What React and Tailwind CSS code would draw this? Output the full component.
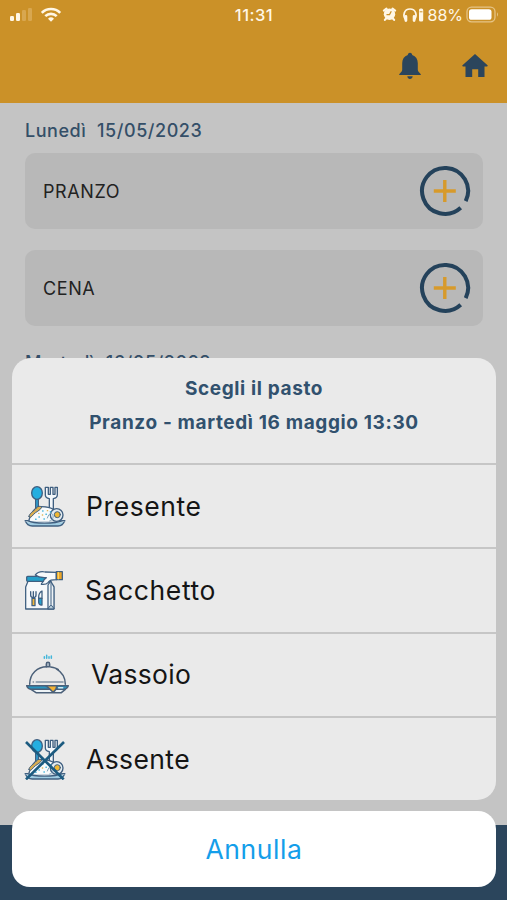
import React from "react";

const days = [
  { label: "Lunedì", date: "15/05/2023", meals: ["PRANZO", "CENA"] },
  { label: "Martedì", date: "16/05/2023", meals: [] },
];

const StatusBar = () => (
  <div className="flex h-[30px] items-center justify-between pl-[9px] pr-[8px] text-[#fff7e6]">
    <div className="flex w-[190px] items-center">
      <svg width="54" height="18" viewBox="0 0 54 18">
        <rect x="1" y="10" width="4" height="5" rx="1.3" fill="currentColor" />
        <rect x="7" y="7" width="4" height="8" rx="1.3" fill="currentColor" />
        <rect x="13" y="4" width="4" height="11" rx="1.3" fill="#d8a750" />
        <rect x="19" y="2" width="4" height="13" rx="1.3" fill="#d8a750" />
        <g fill="none" stroke="currentColor" strokeWidth="2.6">
          <path d="M32.8 6.8a13 13 0 0 1 18.4 0" />
          <path d="M36.3 10.2a8.1 8.1 0 0 1 11.4 0" />
        </g>
        <path d="M42 15.8l-3-3.1a4.3 4.3 0 0 1 6 0z" fill="currentColor" />
      </svg>
    </div>
    <span className="text-[16.5px] font-medium leading-none tracking-[0.5px]">
      11:31
    </span>
    <div className="flex w-[190px] items-center justify-end">
      <svg width="46" height="18" viewBox="0 0 46 18">
        <circle cx="8.5" cy="8.3" r="5.7" fill="currentColor" />
        <path
          d="M2.9 4.6l2.6-2M14.1 4.6l-2.6-2M4.9 12.7l-1 1.2M12.1 12.7l1 1.2"
          stroke="currentColor"
          strokeWidth="2.2"
          strokeLinecap="round"
        />
        <path d="M10.3 5.2L8.5 8.6h-3" fill="none" stroke="#cb9128" strokeWidth="1.2" />
        <path
          d="M25.2 14.5C20.9 9.5 23.3 3 29 3s8.1 6.5 3.8 11.5"
          fill="none"
          stroke="currentColor"
          strokeWidth="1.7"
        />
        <path
          d="M24.9 10.5v4M33.1 10.5v4"
          stroke="currentColor"
          strokeWidth="2.8"
          strokeLinecap="round"
        />
        <rect x="38" y="2.5" width="4.2" height="13" rx="1.5" fill="currentColor" />
        <path d="M38.7 5.8h2.8" stroke="#cb9128" strokeWidth="1" />
      </svg>
      <span className="text-[16px] font-normal leading-none">88%</span>
      <svg className="ml-[3px]" width="33" height="18" viewBox="0 0 33 18">
        <rect x="1" y="1.2" width="28" height="14.6" rx="4.5" fill="none" stroke="#e6c486" strokeWidth="1.3" />
        <rect x="3" y="3.2" width="22.5" height="10.6" rx="2.6" fill="white" />
        <path d="M31 6.3q2 2.2 0 4.4z" fill="#e6c486" />
      </svg>
    </div>
  </div>
);

const BellIcon = () => (
  <svg width="24" height="28" viewBox="0 0 24 28" fill="#2b455c">
    <path d="M12 .8c1.4 0 2.3 1 2.2 2.3 3.7 1.2 5.6 4.3 5.6 8.2v6.2c0 1.8 1 2.5 3 4.8v.7H1.2v-.7c2-2.3 3-3 3-4.8v-6.2c0-3.9 1.9-7 5.6-8.2C9.7 1.8 10.6.8 12 .8z" />
    <path d="M9.3 24.3h5.4c-.3 1.7-1.2 2.7-2.7 2.7s-2.4-1-2.7-2.7z" />
  </svg>
);

const HomeIcon = () => (
  <svg width="28" height="26" viewBox="0 0 28 26" fill="#2b455c">
    <path d="M14 1l12.8 11.5-.6 1.1h-2.7V24h-6.3v-7.7h-6V24H4.5V13.6H1.8l-.6-1.1z" />
  </svg>
);

const AddIcon = () => (
  <svg width="52" height="52" viewBox="0 0 52 52" fill="none">
    <path
      d="M46.7 36.1A23 23 0 1 0 41.7 42.8"
      stroke="#24425b"
      strokeWidth="4"
    />
    <path d="M25.8 15v22M14.8 26h22" stroke="#d79a2b" strokeWidth="3.4" />
  </svg>
);

const PlateArt = () => (
  <g stroke="#3f5f80" strokeWidth="4" strokeLinejoin="round" strokeLinecap="round">
    <path d="M35 38h8v34h-8z" fill="#29abe2" />
    <ellipse cx="39" cy="24" rx="16" ry="19" fill="#25aee0" />
    <path
      d="M64 7v23q0 9 12 11v33h12V41q12-2 12-11V7h-7v21h-6V7h-8v21h-6V7z"
      fill="#f3f7fa"
    />
    <path d="M4 107h118q-5 15-20 16H25Q9 122 4 107z" fill="#9fcce2" />
    <path
      d="M14 108c5-22 18-43 38-43 26 0 44 8 50 26l-5 21H24z"
      fill="#f8fafb"
    />
    <path
      d="M15 94c1-10 13-14 22-25 5-6 12-7 16-2-4 10-18 13-25 22-5 7-13 12-13 5z"
      fill="#d9ad51"
      strokeWidth="3"
    />
    <path d="M4 107c18 8 100 8 118 0" fill="none" stroke="#dce9ef" strokeWidth="4" />
    <path d="M4 107h6c20 10 82 10 107 0h5" fill="none" />
    <circle cx="98" cy="90" r="19" fill="#e3ebf0" />
    <path d="M70 99c5-14 12-18 16-10s-1 17-9 19" fill="none" stroke="#7da3ba" strokeWidth="3" />
    <circle cx="100" cy="89" r="9" fill="#f1b832" strokeWidth="3" />
    <path
      d="M56 78h1M66 88h1M45 96h1M60 102h1M79 80h1M35 103h1"
      stroke="#42b4dc"
      strokeWidth="4.5"
    />
    <path d="M55 90h1M70 77h1M44 85h1" stroke="#ddb452" strokeWidth="4" />
  </g>
);

const PresentIcon = () => (
  <svg width="42" height="42" viewBox="0 0 126 126">
    <PlateArt />
  </svg>
);

const BagIcon = () => (
  <svg width="42" height="42" viewBox="0 0 126 126">
    <g stroke="#3f5f80" strokeWidth="3.8" strokeLinejoin="round" strokeLinecap="round">
      <path d="M12 37L5 54v66h84V51L74 37z" fill="#f6f8fa" />
      <path d="M72 119V48l8-12 10 18v65z" fill="#eef3f6" />
      <path d="M72 119l9-12 9 12zM81 38v67" fill="#b9cdd9" strokeWidth="3" />
      <rect x="8" y="22" width="61" height="15" rx="3" fill="#249fc9" />
      <path
        d="M34 18c6-8 18-11 29-9l34 1v22c-15 0-19 0-25 9-6 7-13 6-20 5 0-5 8-7 8-14l7-6c-9-1-21 1-33-8z"
        fill="#f7f9fa"
      />
      <path d="M97 8h18v24H97z" fill="#eda526" />
      <path d="M103 10v20" stroke="#ffdd70" strokeWidth="3" />
      <path d="M20 68v11q0 6 8 8V68m0 19q8-2 8-8V68" fill="none" strokeWidth="4" />
      <path d="M24 88h9v22h-9z" fill="#f2b638" />
      <path d="M44 85c0-9 4-16 10-19v22H44z" fill="#f4f8fa" />
      <path d="M44 88h10v20c-7 1-10-4-10-8z" fill="#24a1ce" />
    </g>
  </svg>
);

const TrayIcon = () => (
  <svg width="45" height="44" viewBox="0 0 135 132">
    <g stroke="#4b6079" strokeWidth="4.5" strokeLinejoin="round" strokeLinecap="round">
      <path d="M58 16v-5M65 16V7M72 16v-5M79 16V9" stroke="#42b6da" strokeWidth="4.5" />
      <path d="M64 41V33q0-5 5-5t5 5v8z" fill="#a9b7c4" />
      <path d="M14 94C14 62 38 41 65 41M77 42c11 2 18 4 23 8M93 47c17 10 28 26 28 47" fill="none" />
      <path d="M34 87h80" stroke="#8091a3" strokeWidth="5" />
      <path d="M24 87h2" strokeWidth="3" />
      <path d="M18 109h103l-12 10H33z" fill="#edf3f6" />
      <path d="M5 98h125q-2 9-13 11H18Q7 107 5 98z" fill="#2693bf" />
      <path d="M62 98h34q-1 12-12 20-10-12-22-20z" fill="#f4b334" />
      <path d="M101 104h12" stroke="#d5e9f2" />
    </g>
  </svg>
);

const AbsentIcon = () => (
  <svg width="42" height="42" viewBox="0 0 126 126">
    <PlateArt />
    <path d="M6 12l113 112M120 12L6 124" stroke="#1c5b80" strokeWidth="8" />
  </svg>
);

const options = [
  { label: "Presente", Icon: PresentIcon, row: "pl-[12px] gap-[20px]", text: "tracking-[0.6px]" },
  { label: "Sacchetto", Icon: BagIcon, row: "pl-[12px] gap-[19px]", text: "tracking-[0.6px]" },
  { label: "Vassoio", Icon: TrayIcon, row: "pl-[13px] gap-[21px]", text: "tracking-[0.3px]" },
  { label: "Assente", Icon: AbsentIcon, row: "pl-[12px] gap-[20px]", text: "tracking-[0.4px]" },
];

const ActionSheet = () => (
  <div className="absolute inset-x-0 bottom-0 flex flex-col gap-[11px] pb-[13px] pl-[12px] pr-[11px]">
    <div className="h-[442px] overflow-hidden rounded-[19px] bg-[#eaeaea]">
      <div className="flex h-[105px] flex-col items-center pt-[14px] text-[19px] font-bold leading-[34px] tracking-[0.63px] text-[#31516e]">
        <p>Scegli il pasto</p>
        <p>Pranzo - martedì 16 maggio 13:30</p>
      </div>
      {options.map(({ label, Icon, row, text }) => (
        <button
          key={label}
          className={`flex h-[84.25px] w-full items-center border-t-2 border-[#c6c6c6] ${row}`}
        >
          <Icon />
          <span className={`text-[26.5px] leading-none text-[#151515] ${text}`}>
            {label}
          </span>
        </button>
      ))}
    </div>
    <button className="h-[76px] rounded-[18px] bg-white pt-[2px] text-[26.5px] tracking-[0.6px] text-[#149eea]">
      Annulla
    </button>
  </div>
);

const App = () => (
  <div className="relative flex h-[900px] w-[507px] flex-col overflow-hidden bg-[#c4c4c4] font-['Inter',sans-serif]">
    <header className="h-[103px] shrink-0 bg-[#cb9128]">
      <StatusBar />
      <div className="flex h-[72px] items-center justify-end gap-[39px] pr-[18px]">
        <BellIcon />
        <HomeIcon />
      </div>
    </header>

    <main className="flex-1 overflow-hidden pl-[25px] pr-[24px] pt-[14px]">
      {days.map((day) => (
        <section key={day.date} className="mb-[23px]">
          <h2 className="h-[28px] whitespace-pre text-[18px] font-medium leading-[28px] tracking-[0.55px] text-[#344f68]">
            {day.label}
            {"  "}
            {day.date}
          </h2>
          <div className="mt-[8px] flex flex-col gap-[21px]">
            {day.meals.map((meal) => (
              <div
                key={meal}
                className="flex h-[76px] items-center justify-between rounded-[10px] bg-[#b8b8b8] pl-[18px] pr-[12px]"
              >
                <span className="text-[18px] tracking-[0.6px] text-[#222]">{meal}</span>
                <AddIcon />
              </div>
            ))}
          </div>
        </section>
      ))}
    </main>

    <footer className="h-[75px] shrink-0 bg-[#2b455c]" />
    <ActionSheet />
  </div>
);

export default App;
